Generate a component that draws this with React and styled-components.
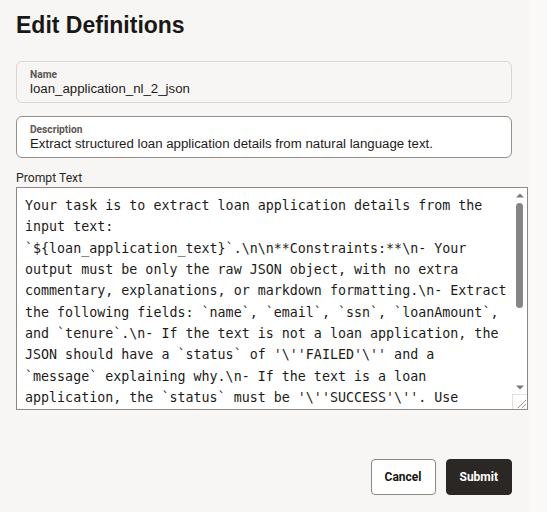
import React from "react";
import styled, { createGlobalStyle } from "styled-components";

const GlobalStyle = createGlobalStyle`
  html, body {
    margin: 0;
    padding: 0;
    background: #faf9f8;
  }
  * { box-sizing: border-box; }
`;

const Page = styled.div`
  width: 529px;
  min-height: 512px;
  background: #f7f6f4;
  padding: 12px 0 0 16px;
  font-family: "Liberation Sans", Arial, sans-serif;
  color: #161513;
`;

const Title = styled.h1`
  margin: 0 0 23px 0;
  font-size: 23px;
  line-height: 26px;
  font-weight: 700;
  color: #1a1816;
`;

const Field = styled.div`
  width: 496px;
  height: 42px;
  margin-bottom: ${(p) => p.$mb || 0}px;
  padding: 0 13px;
  display: flex;
  flex-direction: column;
  justify-content: center;
  border: 1px solid ${(p) => (p.$readonly ? "#d9d7d3" : "#938f8a")};
  border-radius: 6px;
  background: ${(p) => (p.$readonly ? "#f7f6f4" : "#ffffff")};
`;

const FieldLabel = styled.div`
  font-family: Roboto, "Liberation Sans", Arial, sans-serif;
  font-size: 10.2px;
  line-height: 13px;
  font-weight: 700;
  color: #5b5753;
`;

const FieldValue = styled.div`
  font-size: 13.25px;
  line-height: 16px;
  color: #1d1b19;
  white-space: nowrap;
`;

const PromptLabel = styled.label`
  display: block;
  margin: 12px 0 1px 0;
  font-family: Roboto, "Liberation Sans", Arial, sans-serif;
  font-size: 12.2px;
  line-height: 16px;
  color: #2b2826;
`;

const AreaBox = styled.div`
  position: relative;
  width: 512px;
  height: 223px;
  padding: 7px 20px 1px 8px;
  border: 1px solid #8c8884;
  background: #ffffff;
`;

const PromptArea = styled.textarea`
  display: block;
  width: 100%;
  height: 213px;
  margin: 0;
  padding: 0;
  border: 0;
  background: transparent;
  font-family: "DejaVu Sans Mono", monospace;
  font-size: 13.333px;
  line-height: 1.6;
  color: #1d1b19;
  outline: none;
  overflow: hidden;
  resize: none;
`;

const ScrollBar = styled.div`
  position: absolute;
  top: 0;
  right: 0;
  width: 15px;
  bottom: 15px;
  display: flex;
  flex-direction: column;
  background: #ffffff;
  pointer-events: none;
`;

const ArrowButton = styled.div`
  height: 14px;
  flex: none;
  display: flex;
  align-items: center;
  justify-content: center;
`;

const Track = styled.div`
  flex: 1;
  padding: 1px 4px;
`;

const Thumb = styled.div`
  width: 7px;
  border-radius: 4px;
  background: #858585;
`;

const Grip = styled.div`
  position: absolute;
  right: 0;
  bottom: 0;
  width: 15px;
  height: 15px;
  border-top: 1px solid #e0e0e0;
  border-left: 1px solid #e0e0e0;
  background: #ffffff;
  display: flex;
  pointer-events: none;
`;

const Arrow = ({ down }) => (
  <svg width="8" height="5" viewBox="0 0 8 5">
    <path d={down ? "M0 0.5H8L4 4.5Z" : "M0 4.5H8L4 0.5Z"} fill="#7a7a7a" />
  </svg>
);

const GripLines = () => (
  <svg width="14" height="14" viewBox="0 0 14 14">
    <path d="M13 5L5 13M13 9L9 13" stroke="#9a9a9a" strokeWidth="1" fill="none" />
  </svg>
);

const Actions = styled.div`
  width: 496px;
  margin-top: 49px;
  display: flex;
  justify-content: flex-end;
  gap: 10px;
`;

const Button = styled.button`
  height: 36px;
  padding: 0 13px;
  border: 1px solid ${(p) => (p.$primary ? "#2b2724" : "#8c8884")};
  border-radius: 4px;
  background: ${(p) => (p.$primary ? "#2b2724" : "#ffffff")};
  color: ${(p) => (p.$primary ? "#ffffff" : "#161513")};
  font-family: Roboto, "Liberation Sans", Arial, sans-serif;
  font-size: 12px;
  font-weight: 700;
  cursor: pointer;
`;

const promptText =
  "Your task is to extract loan application details from the input text: `${loan_application_text}`.\\n\\n**Constraints:**\\n- Your output must be only the raw JSON object, with no extra commentary, explanations, or markdown formatting.\\n- Extract the following fields: `name`, `email`, `ssn`, `loanAmount`, and `tenure`.\\n- If the text is not a loan application, the JSON should have a `status` of '\\''FAILED'\\'' and a `message` explaining why.\\n- If the text is a loan application, the `status` must be '\\''SUCCESS'\\''. Use `null` for any missing fields.\\n- Ensure `loanAmount` is a number and `tenure` is in months.\\n- Do not include any text outside of the JSON object.\\n\\n**Example Output:**\\n{\"status\": \"SUCCESS\", \"name\": \"John Doe\"}";

export default function App() {
  const thumbHeight = 105;
  return (
    <>
      <GlobalStyle />
      <Page>
        <Title>Edit Definitions</Title>
        <Field $readonly $mb={13}>
          <FieldLabel>Name</FieldLabel>
          <FieldValue>loan_application_nl_2_json</FieldValue>
        </Field>
        <Field>
          <FieldLabel>Description</FieldLabel>
          <FieldValue>
            Extract structured loan application details from natural language text.
          </FieldValue>
        </Field>
        <PromptLabel htmlFor="prompt">Prompt Text</PromptLabel>
        <AreaBox>
          <PromptArea id="prompt" defaultValue={promptText} spellCheck={false} />
          <ScrollBar aria-hidden="true">
            <ArrowButton>
              <Arrow />
            </ArrowButton>
            <Track>
              <Thumb style={{ height: thumbHeight }} />
            </Track>
            <ArrowButton>
              <Arrow down />
            </ArrowButton>
          </ScrollBar>
          <Grip aria-hidden="true">
            <GripLines />
          </Grip>
        </AreaBox>
        <Actions>
          <Button>Cancel</Button>
          <Button $primary>Submit</Button>
        </Actions>
      </Page>
    </>
  );
}
